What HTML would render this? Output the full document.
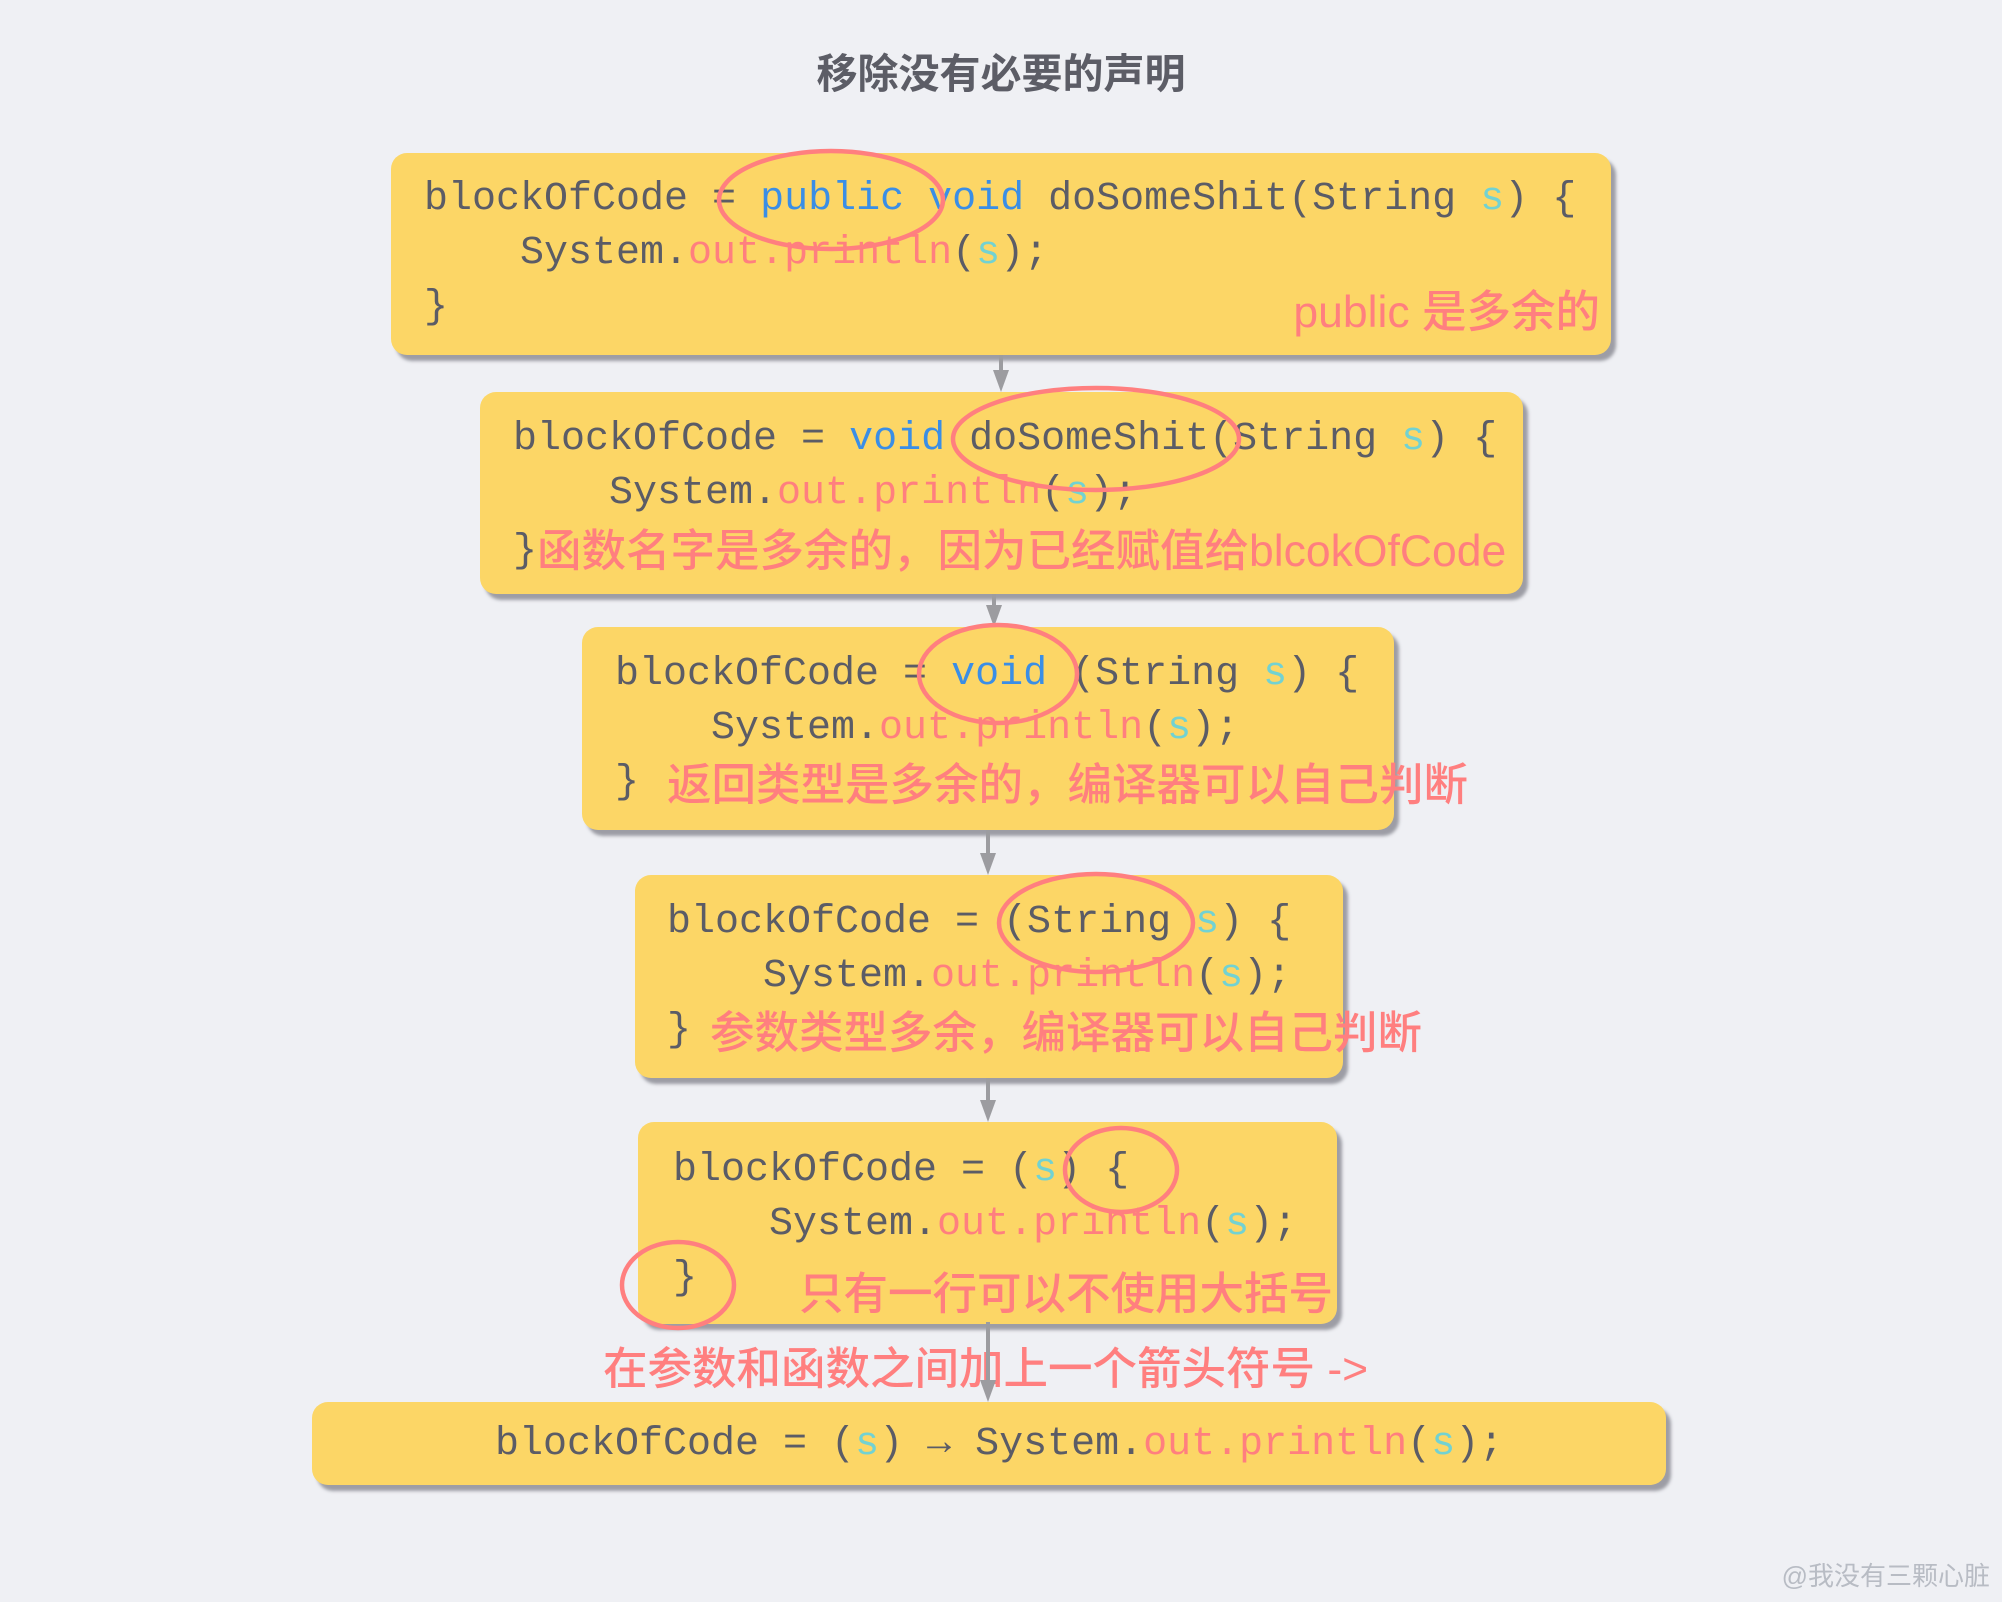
<!DOCTYPE html>
<html><head><meta charset="utf-8"><style>
body{margin:0;width:2002px;height:1602px;background:#eff0f4;position:relative;overflow:hidden;font-family:"Liberation Sans","Noto Sans CJK SC",sans-serif}
.t{position:absolute;left:0;width:2002px;text-align:center;top:40px;font-size:41px;color:#5c5d66;font-weight:bold}
.b{position:absolute;background:#fcd666;border-radius:16px;box-shadow:5px 6px 3px rgba(90,90,100,.55)}
.c{position:absolute;font-family:"Liberation Mono",monospace;font-size:40px;color:#5b5c66;white-space:pre;line-height:1;transform:translateY(-50%)}
.k{color:#3a8ee6}.o{color:#ff7f7f}.s{color:#72d2d2}
.a{position:absolute;font-family:"Liberation Sans","Noto Sans CJK SC",sans-serif;font-size:44.5px;color:#ff7f7f;white-space:pre;line-height:1;transform:translateY(-50%);font-weight:500}
svg{position:absolute;left:0;top:0}
.w{position:absolute;right:12px;top:1556px;font-size:26px;color:#b8bcc4}
</style></head><body>
<div class="t">移除没有必要的声明</div>

<div class="b" style="left:391px;top:153px;width:1220px;height:202px"></div>
<div class="b" style="left:480px;top:392px;width:1043px;height:202px"></div>
<div class="b" style="left:582px;top:627px;width:812px;height:203px"></div>
<div class="b" style="left:635px;top:875px;width:708px;height:203px"></div>
<div class="b" style="left:638px;top:1122px;width:699px;height:202px"></div>
<div class="b" style="left:312px;top:1402px;width:1354px;height:83px"></div>

<div class="c" style="left:424px;top:200px">blockOfCode = <span class="k">public void</span> doSomeShit(String <span class="s">s</span>) {</div>
<div class="c" style="left:424px;top:254px">    System.<span class="o">out.println</span>(<span class="s">s</span>);</div>
<div class="c" style="left:424px;top:308px">}</div>
<div class="a" style="right:402px;top:313px">public 是多余的</div>

<div class="c" style="left:513px;top:440px">blockOfCode = <span class="k">void</span> doSomeShit(String <span class="s">s</span>) {</div>
<div class="c" style="left:513px;top:494px">    System.<span class="o">out.println</span>(<span class="s">s</span>);</div>
<div class="c" style="left:513px;top:552px">}</div>
<div class="a" style="left:537px;top:552px">函数名字是多余的，因为已经赋值给blcokOfCode</div>

<div class="c" style="left:615px;top:675px">blockOfCode = <span class="k">void</span> (String <span class="s">s</span>) {</div>
<div class="c" style="left:615px;top:729px">    System.<span class="o">out.println</span>(<span class="s">s</span>);</div>
<div class="c" style="left:615px;top:783px">}</div>
<div class="a" style="left:667px;top:786px">返回类型是多余的，编译器可以自己判断</div>

<div class="c" style="left:667px;top:923px">blockOfCode = (String <span class="s">s</span>) {</div>
<div class="c" style="left:667px;top:977px">    System.<span class="o">out.println</span>(<span class="s">s</span>);</div>
<div class="c" style="left:667px;top:1031px">}</div>
<div class="a" style="left:710px;top:1034px">参数类型多余，编译器可以自己判断</div>

<div class="c" style="left:673px;top:1171px">blockOfCode = (<span class="s">s</span>) {</div>
<div class="c" style="left:673px;top:1225px">    System.<span class="o">out.println</span>(<span class="s">s</span>);</div>
<div class="c" style="left:673px;top:1279px">}</div>
<div class="a" style="left:799px;top:1295px">只有一行可以不使用大括号</div>

<div class="a" style="left:603px;top:1370px">在参数和函数之间加上一个箭头符号 -&gt;</div>

<div class="c" style="left:495px;top:1445px">blockOfCode = (<span class="s">s</span>) → System.<span class="o">out.println</span>(<span class="s">s</span>);</div>

<svg width="2002" height="1602" viewBox="0 0 2002 1602">
<g stroke="#9c9ca0" stroke-width="4" fill="#9c9ca0">
<line x1="1001" y1="355" x2="1001" y2="375"/><polygon points="993,370 1009,370 1001,392" stroke="none"/>
<line x1="994" y1="594" x2="994" y2="610"/><polygon points="986,605 1002,605 994,627" stroke="none"/>
<line x1="988" y1="830" x2="988" y2="858"/><polygon points="980,853 996,853 988,875" stroke="none"/>
<line x1="988" y1="1078" x2="988" y2="1105"/><polygon points="980,1100 996,1100 988,1122" stroke="none"/>
<line x1="988" y1="1322" x2="988" y2="1385"/><polygon points="980,1380 996,1380 988,1402" stroke="none"/>
</g>
<g stroke="#ff7f7f" stroke-width="4.5" fill="none">
<ellipse cx="831" cy="200" rx="112" ry="49"/>
<ellipse cx="1096" cy="439" rx="143" ry="51"/>
<ellipse cx="998" cy="674" rx="79" ry="49"/>
<ellipse cx="1096" cy="923" rx="97" ry="49"/>
<ellipse cx="1121" cy="1170" rx="56" ry="42"/>
<ellipse cx="678" cy="1285" rx="56" ry="43"/>
</g>
</svg>
<div class="w">@我没有三颗心脏</div>
</body></html>
